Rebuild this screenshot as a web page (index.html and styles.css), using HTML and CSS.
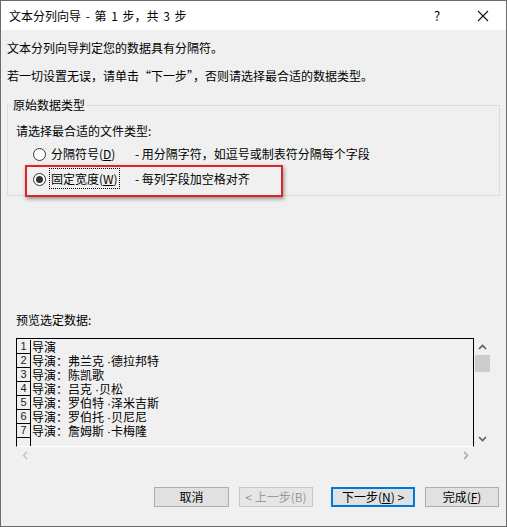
FILE: index.html
```html
<!DOCTYPE html>
<html>
<head>
<meta charset="utf-8">
<link rel="stylesheet" href="styles.css">
</head>
<body>
<div class="window">
  <div class="titlebar">
    <span class="title">文本分列向导 - 第 1 步，共 3 步</span>
    <span class="tb-btn">?</span>
    <span class="tb-btn"><svg width="12" height="12" viewBox="0 0 12 12"><path d="M1 1L11 11M11 1L1 11" stroke="#111" stroke-width="1.1" fill="none"/></svg></span>
  </div>
  <div class="content">
    <p class="line l1">文本分列向导判定您的数据具有分隔符。</p>
    <p class="line l2">若一切设置无误，请单击“下一步”，否则请选择最合适的数据类型。</p>
    <fieldset class="group">
      <legend class="legend">原始数据类型</legend>
      <p class="line prompt">请选择最合适的文件类型:</p>
      <div class="option o1"><span class="radio"></span><span class="opt-label">分隔符号(<u>D</u>)</span><span class="opt-desc">- 用分隔字符，如逗号或制表符分隔每个字段</span></div>
      <div class="option o2"><span class="radio checked"></span><span class="opt-label"><span class="focus">固定宽度(<u>W</u>)</span></span><span class="opt-desc">- 每列字段加空格对齐</span></div>
    </fieldset>
    <p class="line preview-label">预览选定数据:</p>
    <div class="preview">
      <div class="preview-main">
        <div class="grid">
          <div class="row"><span class="num">1</span><span class="cell">导演</span></div>
          <div class="row"><span class="num">2</span><span class="cell">导演：弗兰克<span class="dot">·</span>德拉邦特</span></div>
          <div class="row"><span class="num">3</span><span class="cell">导演：陈凯歌</span></div>
          <div class="row"><span class="num">4</span><span class="cell">导演：吕克<span class="dot">·</span>贝松</span></div>
          <div class="row"><span class="num">5</span><span class="cell">导演：罗伯特<span class="dot">·</span>泽米吉斯</span></div>
          <div class="row"><span class="num">6</span><span class="cell">导演：罗伯托<span class="dot">·</span>贝尼尼</span></div>
          <div class="row"><span class="num">7</span><span class="cell">导演：詹姆斯<span class="dot">·</span>卡梅隆</span></div>
          <div class="row last"><span class="num"></span><span class="cell"></span></div>
        </div>
        <div class="vscroll">
          <span class="arrow"><svg width="9" height="6" viewBox="0 0 9 6"><path d="M1 5L4.5 1.5L8 5" stroke="#5f5f5f" stroke-width="1.6" fill="none"/></svg></span>
          <span class="thumb"></span>
          <span class="spacer"></span>
          <span class="arrow"><svg width="9" height="6" viewBox="0 0 9 6"><path d="M1 1L4.5 4.5L8 1" stroke="#5f5f5f" stroke-width="1.6" fill="none"/></svg></span>
        </div>
      </div>
      <div class="hscroll">
        <span class="arrow"><svg width="6" height="9" viewBox="0 0 6 9"><path d="M5 1L1.5 4.5L5 8" stroke="#c4c4c4" stroke-width="1.6" fill="none"/></svg></span>
        <span class="arrow"><svg width="6" height="9" viewBox="0 0 6 9"><path d="M1 1L4.5 4.5L1 8" stroke="#a8a8a8" stroke-width="1.6" fill="none"/></svg></span>
      </div>
    </div>
    <div class="buttons">
      <span class="btn cancel">取消</span>
      <span class="btn back disabled">&lt; 上一步(B)</span>
      <span class="btn next default">下一步(<u>N</u>) &gt;</span>
      <span class="btn finish">完成(<u>F</u>)</span>
    </div>
  </div>
  <div class="annot"></div>
</div>
</body>
</html>
```
FILE: styles.css
```css
* { box-sizing: border-box; }
html, body { margin: 0; padding: 0; background: #fff; }
body {
  font-family: "Noto Sans CJK SC", "Noto Sans", sans-serif;
  font-size: 12px;
  color: #000;
}
.window {
  position: relative;
  width: 507px;
  height: 527px;
  border: 1px solid #6b6b6b;
  background: #f0f0f0;
  display: flex;
  flex-direction: column;
}
.titlebar {
  height: 29px;
  background: #fff;
  display: flex;
  align-items: center;
  padding-left: 8px;
}
.title { flex: 1; line-height: 16px; word-spacing: 2px; }
.tb-btn {
  width: 46px;
  height: 29px;
  display: flex;
  align-items: center;
  justify-content: center;
  font-size: 13px;
}
.content {
  flex: 1;
  padding: 0 6px;
  display: flex;
  flex-direction: column;
}
.line { margin: 0; line-height: 16px; white-space: nowrap; }
.l1 { margin-top: 10px; }
.l2 { margin-top: 12px; }
.group {
  margin: 13px 0 0 0;
  padding: 0 0 5px 0;
  border: 1px solid #dcdcdc;
  min-width: 0;
}
.legend {
  margin-left: 3px;
  padding: 0 2px;
  line-height: 16px;
}
.prompt { margin: 10px 0 0 8px; }
.option {
  height: 22px;
  display: flex;
  align-items: center;
  white-space: nowrap;
}
.o1 { margin-top: 4px; }
.o2 { margin-top: 3px; }
.radio {
  width: 13px;
  height: 13px;
  border: 1px solid #333;
  border-radius: 50%;
  background: #fff;
  margin-left: 25px;
  margin-right: 5px;
  display: flex;
  align-items: center;
  justify-content: center;
}
.radio.checked::after {
  content: "";
  width: 7px;
  height: 7px;
  border-radius: 50%;
  background: #333;
}
.opt-label { width: 84px; line-height: 16px; }
.focus { outline: 1px dotted #000; outline-offset: 1px; }
.opt-desc { line-height: 16px; }
.preview-label { margin: 116px 0 0 9px; }
.preview {
  margin: 10px 0 0 9px;
  width: 475px;
}
.preview-main { display: flex; height: 109px; }
.grid {
  width: 458px;
  height: 109px;
  border: 1px solid #000;
  border-bottom-color: #fff;
  padding-top: 1px;
  overflow: hidden;
}
.row { display: flex; height: 14px; }
.num {
  width: 14px;
  height: 14px;
  border-right: 1px solid #000;
  border-bottom: 1px solid #000;
  font-family: "Liberation Sans", sans-serif;
  font-size: 11px;
  line-height: 13px;
  text-align: center;
  color: #222;
}
.row.last .num { height: 40px; border-bottom: none; }
.cell { padding-left: 1px; line-height: 14px; white-space: nowrap; }
.dot { font-family: "Liberation Sans", sans-serif; margin-left: 3px; }
.vscroll {
  width: 17px;
  display: flex;
  flex-direction: column;
}
.vscroll .arrow {
  height: 17px;
  display: flex;
  align-items: center;
  justify-content: center;
}
.thumb { height: 17px; width: 15px; margin-left: 1px; background: #cdcdcd; }
.spacer { flex: 1; }
.hscroll {
  width: 458px;
  height: 17px;
  display: flex;
  justify-content: space-between;
}
.hscroll .arrow {
  width: 17px;
  display: flex;
  align-items: center;
  justify-content: center;
}
.buttons {
  margin-top: 23px;
  display: flex;
  justify-content: flex-end;
  padding-right: 1px;
}
.btn {
  height: 20px;
  border: 1px solid #adadad;
  background: #e1e1e1;
  display: flex;
  align-items: center;
  justify-content: center;
  line-height: 16px;
  white-space: nowrap;
}
.cancel { width: 75px; }
.back { width: 74px; margin-left: 10px; }
.next { width: 84px; margin-left: 18px; }
.finish { width: 74px; margin-left: 10px; }
.disabled { color: #9a9a9a; border-color: #c6c6c6; background: #e6e6e6; }
.default { border: 2px solid #0078d7; }
.annot {
  position: absolute;
  left: 24px;
  top: 164px;
  width: 258px;
  height: 32px;
  border: 2px solid #d9262b;
  box-shadow: 1px 2px 4px rgba(0, 0, 0, 0.4);
}
```
